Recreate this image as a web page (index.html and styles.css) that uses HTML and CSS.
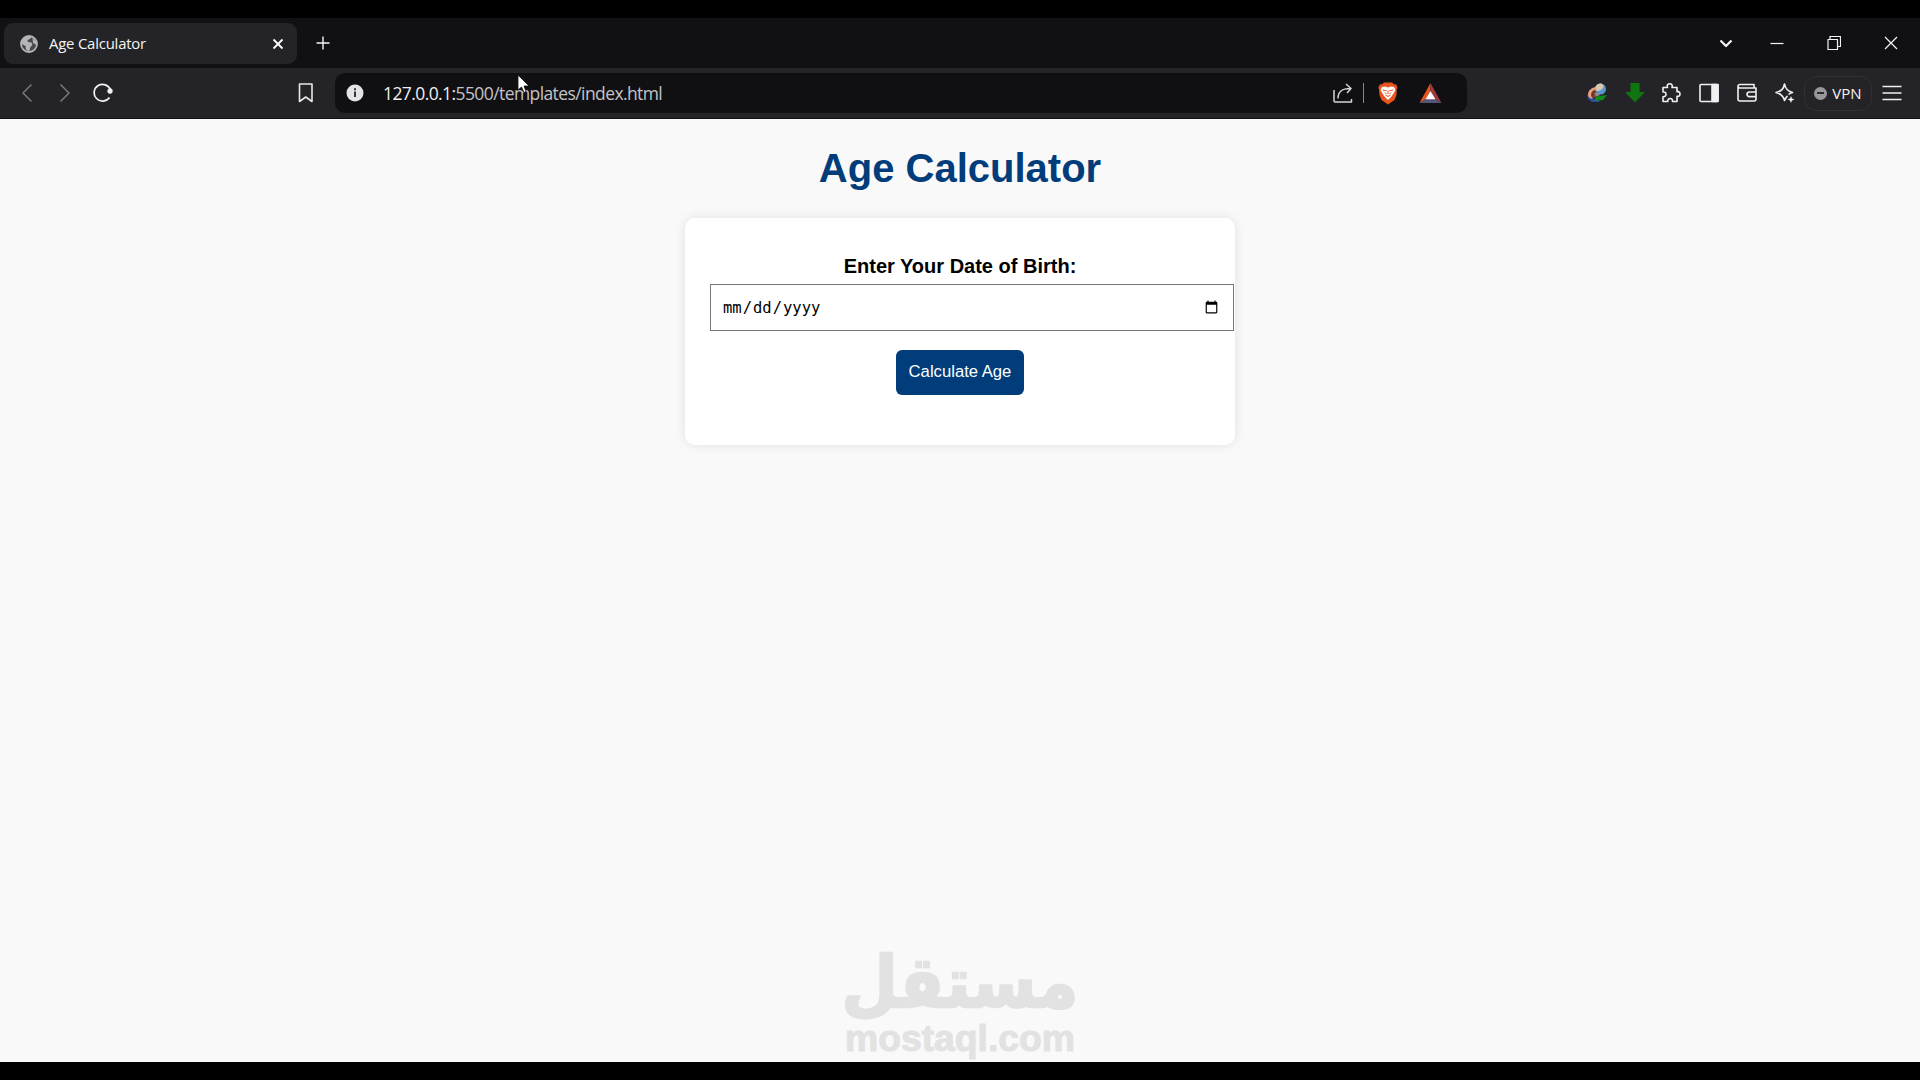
FILE: index.html
```
<!DOCTYPE html>
<html lang="en">

<head>
    <meta charset="UTF-8">
    <meta name="viewport" content="width=device-width, initial-scale=1.0">
    <title>Age Calculator</title>
    <link rel="stylesheet" href="styles.css">
</head>

<body>
    <div class="tabbar">
        <div class="tab">
            <svg class="globe" viewBox="0 0 18 18">
                <circle cx="9" cy="9" r="8" fill="#46474b" stroke="#b5b6b9" stroke-width="1.8" />
                <path d="M1.500 7L4 3l5-2 2.500 1L10 4 7.500 5 8 7l3.500.5 1 2.500-2 2L9 16.500 6 14.500 5.500 11 1.500 9zM12.500 3l4 4v3l-3.500-2z" fill="#b5b6b9" />
            </svg>
            <span class="tab-title">Age Calculator</span>
            <svg class="tab-close" viewBox="0 0 12 12">
                <path d="M1.500 1.500l9 9M10.500 1.500l-9 9" />
            </svg>
        </div>
        <svg class="new-tab" viewBox="0 0 14 14">
            <path d="M7 .5v13M.5 7h13" />
        </svg>
        <div class="window-btns">
            <svg class="down" viewBox="0 0 14 14"><path d="M1.500 4.500L7 10l5.500-5.500" /></svg>
            <svg viewBox="0 0 14 14"><path d="M.5 7.500h13" /></svg>
            <svg viewBox="0 0 14 14"><path d="M1 3.500h9.500v10H1zM3 3.500v-3h10.500v10h-3" /></svg>
            <svg viewBox="0 0 14 14"><path d="M1 1l12 12M13 1L1 13" /></svg>
        </div>
    </div>

    <div class="toolbar">
        <div class="nav">
            <svg class="dim" viewBox="0 0 20 20"><path d="M14.500 1.500L6 10l8.500 8.500" /></svg>
            <svg class="dim" viewBox="0 0 20 20"><path d="M5.500 1.500L14 10l-8.500 8.500" /></svg>
            <svg viewBox="0 0 20 20">
                <path d="M16.500 14.500A8.400 8.400 0 1 1 17.500 7" />
                <circle cx="17" cy="8" r="1.800" class="solid" />
            </svg>
        </div>
        <svg class="bookmark" viewBox="0 0 16 20"><path d="M1.500 1h12.500v17.500L7.750 14 1.500 18.500z" /></svg>
        <div class="address">
            <svg class="info" viewBox="0 0 18 18">
                <circle cx="9" cy="9" r="8.500" fill="#e4e4e6" />
                <path d="M9 7.500V13M9 4.200v2" stroke="#35363c" stroke-width="2" />
            </svg>
            <span class="url"><b>127.0.0.1:</b>5500/templates/index.html</span>
            <svg class="share" viewBox="0 0 20 20">
                <path d="M1 7v11q0 1 1 1h16.500V16M5 15.500C5 9 8 5.500 17.500 5.500M13 1l5 4.500-4 4.500" />
            </svg>
            <span class="sep"></span>
            <svg class="brave" viewBox="0 0 20 23">
                <path d="M6 .5h8l2 1.700 2.200.3 1.300 3-.8 2L18.500 13l-2 5L10 22.500 3.500 18l-2-5L1 7.500l-.6-2 1.400-3L4 2.200z" fill="#e9541f" />
                <path d="M4 5l3-.5 3 1 3-1L16 5l1.500 3-2 3.500-2 3L10 18l-3.500-3.500-2-3-2-3.500z" fill="#fff" />
                <path d="M4.500 8l4 .8M15.500 8l-4 .8M10 8.500V12M7.500 13l2.500 1.500 2.500-1.500M7 10.500l1.500 1.500M13 10.500L11.500 12" stroke="#e9541f" fill="none" />
            </svg>
            <svg class="bat" viewBox="0 0 22 20">
                <path d="M11 0L0 20l6.500-4L11 8z" fill="#e9541f" />
                <path d="M11 0l11 20-6.500-4L11 8z" fill="#9c3a3a" />
                <path d="M0 20h22l-6.500-4h-9z" fill="#56567a" />
                <path d="M11 8l5 8.300H6z" fill="#fff" />
            </svg>
        </div>
        <div class="extensions">
            <svg viewBox="0 0 20 20">
                <path d="M0 11l6 5 8-1-2 4H5l-4-3z" fill="#2c4f9a" />
                <path d="M1 12c0-5 4-8 9-8l-1 4c-3 0-3 3-1 5l-3 3c-2-1-4-2-4-4z" fill="#e2a384" />
                <path d="M4 12c0-3 2-5 4-5l-1 7-2 1z" fill="#8d2c14" />
                <circle cx="13.500" cy="6" r="5.500" fill="#5b97cf" />
                <path d="M8 5c1-4 6-6 8-3s-3 6-6 6z" fill="#d8c9ae" />
                <path d="M7 10l4-1 2 3-4 2z" fill="#8c8c90" />
                <path d="M8 14l4-1 8-1-4 5-8 1z" fill="#128a18" />
            </svg>
            <svg class="download" viewBox="0 0 20 20"><path d="M5.500 0h9v9H20L10 19.500 0 9h5.500z" fill="#107410" /></svg>
            <svg class="line" viewBox="0 0 20 20">
                <path d="M2 4.500h4.500C5.500 2 7 .8 8.700.8s3.300 1.200 2.300 3.700h5v4.300c2-.6 3 .6 3 2.200s-1 2.800-3 2.200v5.300h-4.500c.3-2-.8-3-2.300-3s-2.700 1-2.300 3H2v-4.800c2 .2 3-.8 3-2.400S4 8.700 2 9z" />
            </svg>
            <svg class="line" viewBox="0 0 20 20">
                <rect x="1" y="1.500" width="18" height="17" rx="1" />
                <path d="M13 1.500h6v17h-6z" class="solid" />
            </svg>
            <svg class="line" viewBox="0 0 20 20">
                <path d="M17 5V1.500H3C1.500 1.500 1 2.500 1 3.500V16q0 2 2 2h14q2 0 2-2V5H3q-2 0-2-1.500M19 9h-6.500q-2.500 0-2.500 2.300t2.500 2.300H19" />
            </svg>
            <svg class="line" viewBox="0 0 20 20">
                <path d="M12.500 13c-1.500 1-2 3-3 4.500C8.500 13 6.500 11 1 9.500 6.500 8 8.500 6 9.500 1c1 5 3 7 8 8.500-2 .5-3 1-4 2" />
                <path d="M16 13l1 2.500 2.500 1-2.500 1L16 20l-1-2.500-2.500-1 2.500-1z" class="solid" stroke="none" />
            </svg>
            <div class="vpn"><span class="vpn-dot"></span>VPN</div>
            <svg class="line menu" viewBox="0 0 20 20"><path d="M.5 3.500h19M.5 10h19M.5 16.500h19" /></svg>
        </div>
        <svg class="cursor" viewBox="0 0 14 20">
            <path d="M1 1v15l3.500-3 2.500 5.500 2-1L7 12h5z" />
        </svg>
    </div>

    <div class="page">
        <h1>Age Calculator</h1>
        <div class="container">
            <label for="dob">Enter Your Date of Birth:</label>
            <input type="date" id="dob">
            <button id="calculate">Calculate Age</button>
        </div>
        <svg class="watermark" viewBox="0 0 240 112">
            <text class="mark-ar" x="0" y="0" direction="rtl" text-anchor="middle" transform="translate(120 57) scale(1.080 1.180)">مستقل</text>
            <text class="mark-en" x="5" y="101" textLength="230" lengthAdjust="spacingAndGlyphs">mostaql.com</text>
        </svg>
    </div>
</body>

</html>
```
FILE: styles.css
```
* {
    box-sizing: border-box;
}

body {
    margin: 0;
    height: 1080px;
    padding: 18px 0;
    background-color: #000;
    font-family: "Liberation Sans", Arial, sans-serif;
    display: flex;
    flex-direction: column;
    overflow: hidden;
}

svg {
    flex: none;
    fill: none;
    stroke-linejoin: round;
}

.solid {
    fill: #f2f2f2;
}

/* browser window */
.tabbar {
    height: 50px;
    background-color: #111114;
    display: flex;
    align-items: center;
    padding: 0 22px 0 4px;
    font-family: "Open Sans", sans-serif;
}

.tab {
    width: 293px;
    height: 41px;
    margin-bottom: -1px;
    padding: 0 13px 0 16px;
    border-radius: 9px;
    background-color: #242428;
    display: flex;
    align-items: center;
}

.globe {
    width: 18px;
    height: 18px;
}

.tab-title {
    flex: 1;
    margin-left: 11px;
    padding-bottom: 1px;
    color: #f4f4f4;
    font-size: 14.900px;
    letter-spacing: -0.200px;
}

.tab-close {
    width: 12px;
    height: 12px;
    stroke: #fff;
    stroke-width: 1.800;
}

.new-tab {
    width: 14px;
    height: 14px;
    margin-left: 19px;
    stroke: #f4f4f4;
    stroke-width: 1.400;
}

.window-btns {
    margin-left: auto;
    display: flex;
    gap: 43px;
    align-items: center;
}

.window-btns svg {
    width: 14px;
    height: 14px;
    stroke: #f4f4f4;
    stroke-width: 1.200;
}

.window-btns .down {
    margin-right: -6px;
    stroke-width: 2.200;
}

.toolbar {
    position: relative;
    height: 51px;
    background-color: #242428;
    border-bottom: 1px solid #101012;
    display: flex;
    align-items: center;
    padding: 0 18px 0 17px;
}

.nav {
    display: flex;
    gap: 18px;
}

.nav svg {
    width: 20px;
    height: 20px;
    stroke: #f2f2f2;
    stroke-width: 1.700;
}

.nav .dim {
    stroke: #77777a;
    stroke-width: 1.500;
}

.bookmark {
    width: 16px;
    height: 20px;
    margin-left: 185px;
    stroke: #e8e8ea;
    stroke-width: 1.600;
}

.address {
    width: 1132px;
    height: 40px;
    margin-left: 21px;
    padding: 0 25px 0 11px;
    border-radius: 10px;
    background-color: #101013;
    display: flex;
    align-items: center;
}

.info {
    width: 18px;
    height: 18px;
}

.url {
    flex: 1;
    margin-left: 19px;
    color: #c2c3c7;
    font-family: "Open Sans", sans-serif;
    font-size: 17.500px;
    letter-spacing: -0.590px;
}

.url b {
    font-weight: normal;
    color: #eee;
}

.share {
    width: 20px;
    height: 20px;
    stroke: #d5d5d8;
    stroke-width: 1.500;
}

.sep {
    width: 1px;
    height: 20px;
    margin: 0 14px 0 10px;
    background-color: #88888c;
}

.brave {
    width: 20px;
    height: 23px;
}

.bat {
    width: 23px;
    height: 20px;
    margin-left: 21px;
}

.extensions {
    margin-left: auto;
    display: flex;
    align-items: center;
    gap: 18px;
}

.extensions svg {
    width: 20px;
    height: 20px;
}

.extensions .download {
    margin-right: -2px;
}

.line {
    stroke: #f0f0f2;
    stroke-width: 1.600;
}

.vpn {
    width: 68px;
    height: 35px;
    margin: 0 -8px 0 -9px;
    border: 1px solid #303034;
    border-radius: 12px;
    color: #f4f4f4;
    font-family: "Open Sans", sans-serif;
    font-size: 15px;
    display: flex;
    align-items: center;
    justify-content: center;
    gap: 5px;
}

.vpn-dot {
    width: 13px;
    height: 13px;
    border-radius: 50%;
    background: linear-gradient(#2a2a2e, #2a2a2e) center / 7px 2px no-repeat #98989c;
}

.cursor {
    position: absolute;
    left: 517px;
    top: 6px;
    width: 14px;
    height: 20px;
    fill: #fff;
    stroke: #111;
    stroke-width: 0.800;
}

/* page */
.page {
    flex: 1;
    background-color: #f9f9f9;
    display: flex;
    flex-direction: column;
    align-items: center;
}

h1 {
    margin: 26px 0 27px;
    font-size: 40px;
    line-height: 46px;
    color: #003d7a;
}

.container {
    width: 550px;
    height: 227px;
    padding: 36px 25px 0;
    border-radius: 10px;
    background-color: #fff;
    box-shadow: 0 0 12px rgba(0, 0, 0, 0.1);
    display: flex;
    flex-direction: column;
    align-items: center;
}

label {
    font-size: 20px;
    line-height: 24px;
    font-weight: bold;
}

#dob {
    width: 524px;
    height: 47px;
    flex: none;
    align-self: flex-start;
    margin: 6px 0 19px;
    padding: 0 12px 0 11px;
    border: 1px solid #767676;
    font-family: "DejaVu Sans Mono", monospace;
    font-size: 15.500px;
    background-color: #fff;
    color: #000;
}

button {
    width: 128px;
    height: 45px;
    padding: 0 0 2px;
    border: none;
    border-radius: 6px;
    background-color: #003d7a;
    color: #fff;
    font-family: "Liberation Sans", Arial, sans-serif;
    font-size: 16.670px;
}

.watermark {
    width: 240px;
    height: 112px;
    margin-top: auto;
    fill: #e2e2e2;
}

.mark-ar {
    font-family: "DejaVu Sans", sans-serif;
    font-size: 60px;
    font-weight: bold;
    stroke: #e2e2e2;
    stroke-width: 2;
}

.mark-en {
    font-family: "Liberation Sans", Arial, sans-serif;
    font-size: 37px;
    font-weight: bold;
    stroke: #e2e2e2;
}
```
